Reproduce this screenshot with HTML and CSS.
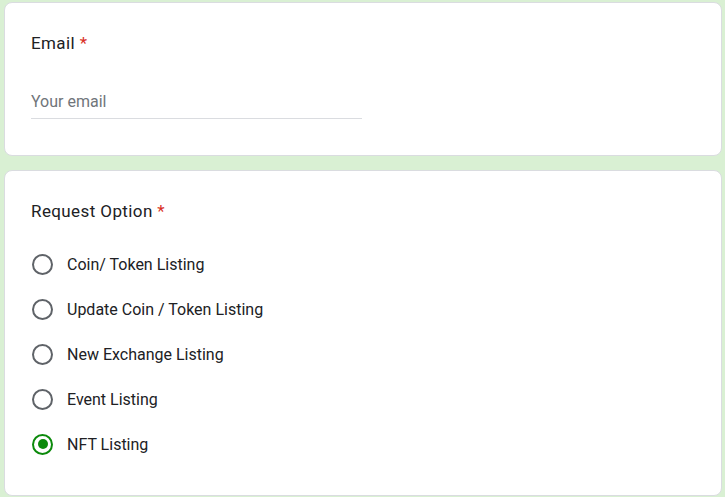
FILE: index.html
```html
<!DOCTYPE html>
<html lang="en">
<head>
  <meta charset="UTF-8" />
  <meta name="viewport" content="width=device-width, initial-scale=1.0" />
  <title>Request Form</title>
  <link rel="stylesheet" href="styles.css">
</head>
<body>
  <div class="form">
    <div class="card card-email">
      <div class="question">Email <span class="req">*</span></div>
      <div class="input-line">Your email</div>
    </div>

    <div class="card card-options">
      <div class="question">Request Option <span class="req">*</span></div>
      <div class="options">
        <label class="option"><span class="radio"></span>Coin/ Token Listing</label>
        <label class="option"><span class="radio"></span>Update Coin / Token Listing</label>
        <label class="option"><span class="radio"></span>New Exchange Listing</label>
        <label class="option"><span class="radio"></span>Event Listing</label>
        <label class="option"><span class="radio checked"></span>NFT Listing</label>
      </div>
    </div>
  </div>
</body>
</html>
```

FILE: styles.css
```css
body {
  font-family: Roboto, Arial, sans-serif;
  background-color: #d9f0d3;
  margin: 0;
  padding: 0;
}
.form {
  padding: 2px 3px 0 4px;
  display: flex;
  flex-direction: column;
  gap: 14px;
}
.card {
  background-color: white;
  border: 1px solid #dadce0;
  border-radius: 8px;
  padding: 0 26px;
}
.card-email {
  padding-top: 28px;
  height: 124px;
}
.card-options {
  padding-top: 28px;
  height: 296px;
}
.question {
  font-size: 17px;
  line-height: 24px;
  color: #202124;
  letter-spacing: 0.4px;
}
.req {
  color: #d93025;
}
.input-line {
  width: 331px;
  margin-top: 35px;
  padding-bottom: 4px;
  border-bottom: 1px solid #dadce0;
  font-size: 16px;
  line-height: 24px;
  color: #70757a;
}
.options {
  margin-top: 26px;
  display: flex;
  flex-direction: column;
  gap: 15px;
}
.option {
  display: flex;
  align-items: center;
  gap: 14px;
  height: 30px;
  font-size: 16px;
  color: #202124;
}
.radio {
  box-sizing: border-box;
  width: 21px;
  height: 21px;
  margin-left: 1px;
  border: 2px solid #5f6368;
  border-radius: 50%;
  display: flex;
  align-items: center;
  justify-content: center;
}
.radio.checked {
  border-color: #0b8a0b;
}
.radio.checked::after {
  content: "";
  width: 10px;
  height: 10px;
  border-radius: 50%;
  background-color: #0b8a0b;
}
```
